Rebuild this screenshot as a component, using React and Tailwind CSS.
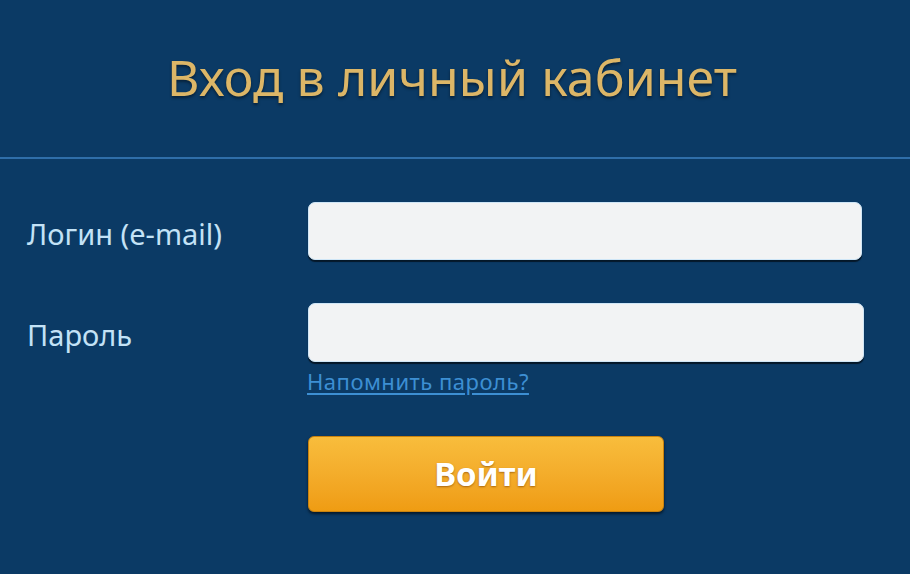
export default function App() {
  const font = { fontFamily: '"Noto Sans", "Open Sans", sans-serif' };
  return (
    <div className="w-[910px] h-[574px] bg-[#0b3a65] overflow-hidden" style={font}>
      <div className="h-[157px] flex items-center justify-center pb-[4px]">
        <h1
          className="text-[50px] leading-none text-[#dcb667] tracking-[0.1px] pr-[6px]"
          style={{ textShadow: '0 2px 3px rgba(0,0,0,0.45)' }}
        >
          Вход в личный кабинет
        </h1>
      </div>
      <div className="h-[2px] bg-[#2f6ea9]" />
      <div className="pt-[43px] flex flex-col">
        <div className="flex items-center h-[58px]">
          <div className="w-[308px] pl-[27px] text-[29px] text-[#c3e2f6] leading-none pt-[4px]">
            Логин (e-mail)
          </div>
          <div className="w-[554px] h-[58px] rounded-[7px] bg-[#f2f3f4] border border-[#cfe6f7] shadow-[0_2px_1px_rgba(0,0,0,0.6)]" />
        </div>
        <div className="flex items-center h-[59px] mt-[43px]">
          <div className="w-[308px] pl-[27px] text-[29px] text-[#c3e2f6] leading-none pt-[4px]">
            Пароль
          </div>
          <div className="w-[556px] h-[59px] rounded-[7px] bg-[#f2f3f4] border border-[#cfe6f7] shadow-[0_2px_1px_rgba(0,0,0,0.6)]" />
        </div>
        <div className="pl-[307px] mt-[5px]">
          <a href="#" className="text-[22px] leading-[28px] text-[#3d8fd3] underline underline-offset-[3px] tracking-[0.5px]">
            Напомнить пароль?
          </a>
        </div>
        <div className="pl-[308px] mt-[40px]">
          <button
            className="w-[356px] h-[76px] rounded-[6px] bg-gradient-to-b from-[#f8bd3c] to-[#ef9c12] border border-[#c9820e] shadow-[0_2px_3px_rgba(0,0,0,0.6)] text-white text-[33px] font-bold flex items-center justify-center"
            style={{ textShadow: '0 1px 2px rgba(120,60,0,0.6)' }}
          >
            Войти
          </button>
        </div>
      </div>
    </div>
  );
}
